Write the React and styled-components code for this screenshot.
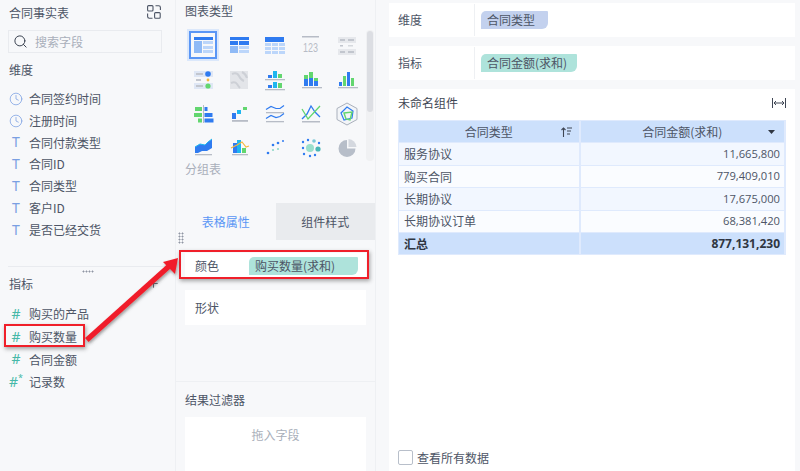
import React from 'react'
import styled, { createGlobalStyle } from 'styled-components'
import { Clock, Search, Plus } from 'lucide-react'

const Global = createGlobalStyle`
  html, body { margin: 0; padding: 0; background: #f7f8fa; }
  * { box-sizing: border-box; }
`

const Page = styled.div`
  position: relative;
  display: flex;
  width: 800px;
  height: 471px;
  overflow: hidden;
  background: #f7f8fa;
  color: #4d5566;
  font: 12px/1.3 "Noto Sans CJK SC", "Noto Sans", sans-serif;
`

const FieldPanel = styled.aside`
  flex: 0 0 176px;
  border-right: 1px solid #eef0f3;
`
const TitleRow = styled.div`
  display: flex;
  justify-content: space-between;
  height: 28px;
  padding: 5px 14px 0 9px;
`
const SearchBox = styled.div`
  display: flex;
  align-items: center;
  gap: 7px;
  width: 154px;
  height: 23px;
  margin: 2px 0 0 8px;
  padding-left: 4px;
  border: 1px solid #e9ebef;
  color: #a9afba;
  svg { color: #3a4250; }
`
const SectionLabel = styled.div`
  display: flex;
  align-items: center;
  justify-content: space-between;
  height: 22px;
  padding: 0 15px 0 9px;
  margin-top: ${p => p.$top || 0}px;
`
const FieldList = styled.div`
  margin-top: ${p => p.$top}px;
`
const Field = styled.div`
  display: flex;
  align-items: center;
  height: ${p => p.$h}px;
  padding-left: 9px;
`
const FieldIcon = styled.span`
  display: flex;
  justify-content: center;
  width: 14px;
  margin-right: 6px;
  color: ${p => (p.$measure ? '#46b8a8' : '#7a9fe2')};
  font: 14px/1 "Noto Sans", sans-serif;
  sup { font-size: 9px; line-height: 0; margin-top: 3px; }
`
const Divider = styled.div`
  height: 1px;
  margin: ${p => p.$top}px 0 0 8px;
  background: #e9ebef;
`
const Grip = styled.div`
  width: ${p => p.$w}px;
  height: ${p => p.$h}px;
  background-image: radial-gradient(circle, #8f96a3 0.9px, transparent 1.1px);
  background-size: 3px 3px;
`
const GripRow = styled.div`
  display: flex;
  justify-content: center;
  height: 6px;
  padding: 3px 0 0 0;
`

const ConfigPanel = styled.section`
  position: relative;
  flex: 0 0 200px;
  display: flex;
  flex-direction: column;
  border-right: 1px solid #eef0f3;
`
const PanelTitle = styled.div`
  height: 22px;
  margin-bottom: 6px;
  line-height: 22px;
`
const ChartArea = styled.div`
  position: relative;
  height: 181px;
  padding-left: 9px;
`
const ChartGrid = styled.div`
  display: grid;
  grid-template-columns: repeat(5, 36px);
  grid-auto-rows: 34.4px;
`
const ChartCell = styled.div`
  display: flex;
  align-items: center;
  justify-content: center;
`
const ChartFrame = styled.div`
  display: flex;
  align-items: center;
  justify-content: center;
  width: 28px;
  height: 28px;
  ${p => p.$on && 'border: 2px solid #5a96f5; box-shadow: 0 0 0 2px #dbe8fb;'}
`
const GroupLabel = styled.div`
  margin-top: -5px;
  color: #a9afba;
`
const ScrollTrack = styled.div`
  position: absolute;
  top: 30px;
  right: 1px;
  width: 8px;
  height: 131px;
  padding: 1px;
  border-radius: 4px;
  background: #f0f1f3;
`
const ScrollThumb = styled.div`
  height: 81px;
  border-radius: 3px;
  background: #dcdee3;
`
const Tabs = styled.div`
  display: flex;
  height: 37px;
  margin-top: 22px;
`
const Tab = styled.div`
  flex: 1;
  display: flex;
  align-items: center;
  justify-content: center;
  color: ${p => (p.$on ? '#5a96f5' : '#4d5566')};
  background: ${p => (p.$on ? '#f7f8fa' : '#e9ebee')};
`
const SideGrip = styled(Grip)`
  position: absolute;
  left: 2px;
  top: 232px;
`
const PropRow = styled.div`
  display: flex;
  align-items: center;
  height: ${p => p.$h}px;
  margin: ${p => p.$top}px 9px 0;
  padding-left: 10px;
  background: #fff;
`
const PropName = styled.span`
  width: 54px;
`
const Pill = styled.span`
  display: flex;
  align-items: center;
  width: ${p => p.$w}px;
  height: 18px;
  padding-left: 6px;
  border-radius: 5px 1px 6px 0;
  background: ${p => (p.$measure ? '#aee3db' : '#c3d1ee')};
`
const FilterBlock = styled.div`
  margin-top: 56px;
  border-top: 1px solid #eef0f3;
  padding: 7px 9px 0;
  flex: 1;
  display: flex;
  flex-direction: column;
`
const FilterTitle = styled.div`
  height: 21px;
  line-height: 21px;
`
const DropBox = styled.div`
  flex: 1;
  margin-top: 7px;
  padding-top: 10px;
  background: #fff;
  color: #a9afba;
  text-align: center;
`

const Stage = styled.main`
  flex: 1;
  display: flex;
  flex-direction: column;
  gap: 9px;
  padding: 3px 5px 0 13px;
`
const ShelfRow = styled.div`
  display: flex;
  align-items: center;
  height: 34px;
  background: #fff;
`
const ShelfName = styled.div`
  display: flex;
  align-items: center;
  width: 86px;
  height: 32px;
  padding-left: 9px;
  margin-right: 6px;
  border-right: 1px solid #eef0f3;
`
const ResultCard = styled.div`
  flex: 1;
  display: flex;
  flex-direction: column;
  padding: 0 9px;
  background: #fff;
`
const ResultHead = styled.div`
  display: flex;
  align-items: center;
  justify-content: space-between;
  height: 31px;
  padding-bottom: 4px;
  color: #3f4654;
`
const DataTable = styled.table`
  width: 388px;
  border-collapse: collapse;
  table-layout: fixed;
  font-size: 12px;
`
const Cell = styled.td`
  position: relative;
  height: 22.4px;
  padding: ${p => (p.$num ? '0 4px 0 5px' : '0 5px')};
  border: 1px solid #dfeafd;
  border-right-width: 2px;
  color: #4d5566;
  text-align: ${p => p.$align || 'left'};
  font-family: ${p => (p.$num ? '"Open Sans", "Noto Sans", sans-serif' : 'inherit')};
  font-size: ${p => (p.$num && !p.$bold ? '11.2px' : '12px')};
  font-weight: ${p => (p.$bold ? 700 : 400)};
  ${p => p.$bold && 'color: #2f3642;'}
  background: ${p => p.$bg};
`
const HeadIcon = styled.span`
  position: absolute;
  top: 50%;
  right: ${p => p.$right}px;
  display: flex;
  transform: translateY(-50%);
`
const Footer = styled.label`
  display: flex;
  align-items: center;
  gap: 4px;
  margin-top: auto;
  height: 26px;
  padding-bottom: 1px;
`
const CheckBox = styled.span`
  width: 15px;
  height: 15px;
  border: 1px solid #b8bfca;
  border-radius: 2px;
  background: #fff;
`

const Callout = styled.div`
  position: absolute;
  left: ${p => p.$x}px;
  top: ${p => p.$y}px;
  width: ${p => p.$w}px;
  height: ${p => p.$h}px;
  border: 2px solid #f01f2a;
  box-shadow: 1px 2px 4px rgba(60, 60, 60, 0.45);
`
const ArrowLayer = styled.svg`
  position: absolute;
  left: 0;
  top: 0;
  pointer-events: none;
`

const B = '#2f7bf0'
const M = '#8fbaf6'
const L = '#bcd6fa'
const G = '#62d66f'
const C = '#1fb6ef'
const Y = '#f5b83d'
const A = '#b7bcc6'

const R = ({ x, y, w, h, f }) => <rect x={x} y={y} width={w} height={h} fill={f} />
const Dots = ({ list, f, r = 1.3 }) => list.map(([x, y], i) => <circle key={i} cx={x} cy={y} r={r} fill={f} />)

const charts = [
  <><R x={5} y={6} w={19} h={3} f={B} /><R x={5} y={10} w={8} h={12} f={M} /><R x={14} y={10} w={10} h={3} f={L} /><R x={14} y={15} w={10} h={3} f={L} /><R x={14} y={19} w={10} h={3} f={L} /></>,
  <><R x={5} y={6} w={19} h={3} f={B} /><R x={5} y={10} w={8} h={4} f={B} /><R x={14} y={10} w={10} h={4} f={B} /><R x={5} y={15} w={8} h={7} f={M} /><R x={14} y={15} w={10} h={3} f={L} /><R x={14} y={19} w={10} h={3} f={L} /></>,
  <><R x={4} y={6} w={19} h={5} f={B} />{[12, 16, 20].map(y => [4, 11, 18].map(x => <R key={`${x}-${y}`} x={x} y={y} w={6} h={3} f={L} />))}</>,
  <><R x={5} y={5} w={17} h={1.5} f={A} /><text x={13.5} y={21} textAnchor="middle" fontFamily="Liberation Sans, sans-serif" fontSize="13" fill={A} textLength="15" lengthAdjust="spacingAndGlyphs">123</text></>,
  <><R x={5} y={6} w={18} h={6} f="#e6e8ec" /><R x={5} y={18} w={18} h={6} f="#e6e8ec" /><R x={7} y={8} w={5} h={2} f="#c2c6ce" /><R x={15} y={8} w={6} h={2} f="#c2c6ce" /><R x={7} y={14} w={3} h={1.5} f="#c2c6ce" /><R x={15} y={14} w={5} h={1.5} f="#d6d9de" /><R x={7} y={20} w={5} h={2} f="#c2c6ce" /><R x={15} y={20} w={6} h={2} f="#c2c6ce" /></>,
  <><R x={5} y={5} w={19} h={6} f="#dfe7f5" /><R x={5} y={17} w={19} h={6} f="#dfe7f5" /><R x={7} y={7} w={7} h={2} f="#c2c6ce" /><R x={7} y={13} w={5} h={2} f="#c2c6ce" /><R x={7} y={19} w={7} h={2} f="#c2c6ce" /><Dots list={[[19, 8]]} f={B} r={2.8} /><Dots list={[[19, 14]]} f={Y} r={1.4} /><Dots list={[[19, 20]]} f={G} r={2.6} /></>,
  <><R x={5} y={5} w={18} h={18} f="#e3e5e9" /><path d="M7 8q5-2 7 2t5 5M6 17q4-2 6 1t3 4M17 6q4 2 5 6" fill="none" stroke="#cdd0d6" strokeWidth="2" /></>,
  <><R x={4} y={13} w={20} h={1.3} f={A} /><R x={4} y={23} w={20} h={1.3} f={A} /><R x={7} y={9} w={4} h={3} f={B} /><R x={12} y={5} w={4} h={7} f={C} /><R x={17} y={8} w={4} h={4} f={G} /><R x={7} y={19} w={4} h={3} f={B} /><R x={12} y={16} w={4} h={6} f={C} /><R x={17} y={17} w={4} h={5} f={G} /></>,
  <><R x={5} y={21} w={20} h={1.3} f={A} /><R x={7} y={13} w={4} h={7} f={B} /><R x={7} y={9} w={4} h={4} f={G} /><R x={12} y={12} w={4} h={8} f={B} /><R x={12} y={6} w={4} h={6} f={G} /><R x={17} y={15} w={4} h={5} f={B} /><R x={17} y={12} w={4} h={3} f={G} /></>,
  <><R x={5} y={21} w={20} h={1.3} f={A} /><R x={6} y={16} w={3} h={4} f={B} /><R x={10} y={10} w={3} h={10} f={G} /><R x={14} y={6} w={3} h={14} f={B} /><R x={18} y={12} w={3} h={8} f={G} /></>,
  <><R x={14} y={5} w={1} h={18} f={A} /><R x={6} y={7} w={7} h={4} f={G} /><R x={15.5} y={7} w={3} h={4} f={B} /><R x={5} y={13} w={8} h={4} f={G} /><R x={15.5} y={13} w={8} h={4} f={B} /><R x={9} y={18.5} w={4} h={4} f={G} /><R x={15.5} y={18.5} w={9} h={4} f={B} /></>,
  <><R x={7} y={20} w={16} h={1.8} f={A} /><R x={7} y={13} w={4} h={6} f={B} /><R x={12} y={10} w={4} h={4} f={C} /><R x={18} y={7} w={4} h={3} f={G} /></>,
  <><R x={5} y={12} w={18} h={1.3} f={A} /><R x={5} y={21} w={18} h={1.3} f={A} /><path d="M5 9.5l5-3 5 2 4 0 4-3M5 18.5l5-3 5 2 4-1 4-3" fill="none" stroke={B} strokeWidth="1.2" /></>,
  <><R x={5} y={21} w={18} h={1.5} f={A} /><path d="M5 19l5-5 4-8 4 6 5 5" fill="none" stroke={B} strokeWidth="1.3" /><path d="M5 9l6 10 12-13" fill="none" stroke={G} strokeWidth="1.3" /></>,
  <><path d="M14 3l10 5.5v11L14 25 4 19.5v-11z" fill="#f3f5f8" stroke="#a9b0bc" strokeWidth="1" /><path d="M14 7l6 4-1 7-8 2-3-7z" fill="none" stroke={B} strokeWidth="1.2" /><path d="M11 13l8-1-2 8-4-1z" fill="none" stroke={G} strokeWidth="1.4" /></>,
  <><R x={6} y={20} w={17} h={1.3} f={A} /><path d="M6 13l5-3 5 1 3-3 4-3v9l-5 3-5 0-4 2-3 0z" fill={B} /><path d="M6 13l5-3 5 1 3-3 4-3" fill="none" stroke={C} strokeWidth="1" /></>,
  <><R x={7} y={20} w={16} h={1.3} f={A} /><R x={8} y={9} w={4} h={10} f={B} /><R x={12} y={6} w={4} h={13} f={C} /><R x={17} y={14} w={4} h={5} f={G} /><path d="M6 14l6-3 5-3 4 5 3-1" fill="none" stroke={Y} strokeWidth="1.1" /></>,
  <><Dots list={[[7, 19], [12, 11], [17, 9]]} f={B} /><Dots list={[[22, 7]]} f={B} r={1} /><Dots list={[[17, 15], [12, 16]]} f="#8fd8c8" r={1.1} /></>,
  <><Dots list={[[13, 14]]} f="#9adfcc" r={4} /><Dots list={[[21, 15]]} f="#4ab6b6" r={2.6} /><Dots list={[[17, 7]]} f="#7cc8d8" r={1.8} /><Dots list={[[6, 8], [11, 6], [6, 14], [7, 20], [13, 22], [18, 21], [22, 9]]} f={B} r={1.2} /></>,
  <><path d="M14 6a8.5 8.5 0 1 0 8.5 8.5H14z" fill="#b7bec9" /><path d="M15.5 5a8.5 8.5 0 0 1 8 8h-8z" fill="#d4d8df" /></>,
]

const SwapIcon = () => (
  <svg width="14" height="14" viewBox="0 0 14 14" fill="none" stroke="#4d5566" strokeWidth="1.1">
    <rect x="0.6" y="0.6" width="5.4" height="5.4" rx="1" />
    <rect x="7.6" y="7.6" width="5.6" height="5.6" rx="1" />
    <path d="M8.5 0.8h3.2q1.7 0 1.7 1.7v2.6M5.5 13.2H2.3q-1.7 0-1.7-1.7V8.5" />
  </svg>
)

const FitIcon = () => (
  <svg width="14" height="10" viewBox="0 0 14 10" fill="none" stroke="#3f4654" strokeWidth="1">
    <path d="M.5 0v10M13.5 0v10M2 5h10M4 3L2 5l2 2M10 3l2 2-2 2" />
  </svg>
)

const SortIcon = () => (
  <svg width="11" height="10" viewBox="0 0 11 10" fill="none" stroke="#3f4654" strokeWidth="1.1">
    <path d="M2.5 10V1M.5 3l2-2 2 2M6 1h5M6 4h4M6 7h3" />
  </svg>
)

const Caret = () => (
  <svg width="7" height="4" viewBox="0 0 7 4"><path d="M0 0h7L3.5 4z" fill="#2f3642" /></svg>
)

const dims = [
  ['clock', '合同签约时间'],
  ['clock', '注册时间'],
  ['T', '合同付款类型'],
  ['T', '合同ID'],
  ['T', '合同类型'],
  ['T', '客户ID'],
  ['T', '是否已经交货'],
]
const measures = ['购买的产品', '购买数量', '合同金额']
const rows = [
  ['服务协议', '11,665,800'],
  ['购买合同', '779,409,010'],
  ['长期协议', '17,675,000'],
  ['长期协议订单', '68,381,420'],
]

export default function App() {
  return (
    <Page>
      <Global />
      <FieldPanel>
        <TitleRow>
          <span>合同事实表</span>
          <SwapIcon />
        </TitleRow>
        <SearchBox>
          <Search size={15} strokeWidth={1.6} />
          <span>搜索字段</span>
        </SearchBox>
        <SectionLabel $top={6}>维度</SectionLabel>
        <FieldList $top={7}>
          {dims.map(([kind, name]) => (
            <Field key={name} $h={21.8}>
              <FieldIcon>{kind === 'clock' ? <Clock size={14} strokeWidth={1.3} /> : 'T'}</FieldIcon>
              {name}
            </Field>
          ))}
        </FieldList>
        <Divider $top={25} />
        <GripRow><Grip $w={12} $h={3} /></GripRow>
        <SectionLabel>
          指标
          <Plus size={13} strokeWidth={1.5} color="#3a4250" />
        </SectionLabel>
        <FieldList $top={8}>
          {measures.map(name => (
            <Field key={name} $h={22.7}>
              <FieldIcon $measure>#</FieldIcon>
              {name}
            </Field>
          ))}
          <Field $h={22.7}>
            <FieldIcon $measure>#<sup>*</sup></FieldIcon>
            记录数
          </Field>
        </FieldList>
      </FieldPanel>

      <ConfigPanel>
        <ChartArea>
          <PanelTitle>图表类型</PanelTitle>
          <ChartGrid>
            {charts.map((c, i) => (
              <ChartCell key={i}>
                <ChartFrame $on={i === 0}>
                  <svg width={i === 0 ? 24 : 28} height={i === 0 ? 24 : 28} viewBox={i === 0 ? '2 2 24 24' : '0 0 28 28'}>{c}</svg>
                </ChartFrame>
              </ChartCell>
            ))}
          </ChartGrid>
          <GroupLabel>分组表</GroupLabel>
          <ScrollTrack><ScrollThumb /></ScrollTrack>
        </ChartArea>
        <Tabs>
          <Tab $on>表格属性</Tab>
          <Tab>组件样式</Tab>
        </Tabs>
        <SideGrip $w={6} $h={12} />
        <PropRow $h={25} $top={13}>
          <PropName>颜色</PropName>
          <Pill $measure $w={109}>购买数量(求和)</Pill>
        </PropRow>
        <PropRow $h={35} $top={12}>
          <PropName>形状</PropName>
        </PropRow>
        <FilterBlock>
          <FilterTitle>结果过滤器</FilterTitle>
          <DropBox>拖入字段</DropBox>
        </FilterBlock>
      </ConfigPanel>

      <Stage>
        <ShelfRow>
          <ShelfName>维度</ShelfName>
          <Pill $w={67}>合同类型</Pill>
        </ShelfRow>
        <ShelfRow>
          <ShelfName>指标</ShelfName>
          <Pill $measure $w={96}>合同金额(求和)</Pill>
        </ShelfRow>
        <ResultCard>
          <ResultHead>
            <span>未命名组件</span>
            <FitIcon />
          </ResultHead>
          <DataTable>
            <colgroup>
              <col style={{ width: 181 }} />
              <col />
            </colgroup>
            <tbody>
              <tr>
                <Cell $bg="#cce0fc" $align="center">
                  合同类型
                  <HeadIcon $right={7}><SortIcon /></HeadIcon>
                </Cell>
                <Cell $bg="#cce0fc" $align="center">
                  合同金额(求和)
                  <HeadIcon $right={9}><Caret /></HeadIcon>
                </Cell>
              </tr>
              {rows.map(([name, value], i) => (
                <tr key={name}>
                  <Cell $bg={i % 2 ? '#fafcff' : '#f2f7ff'}>{name}</Cell>
                  <Cell $bg={i % 2 ? '#fafcff' : '#f2f7ff'} $align="right" $num>{value}</Cell>
                </tr>
              ))}
              <tr>
                <Cell $bg="#cce0fc" $bold>汇总</Cell>
                <Cell $bg="#cce0fc" $bold $num $align="right">877,131,230</Cell>
              </tr>
            </tbody>
          </DataTable>
          <Footer>
            <CheckBox />
            查看所有数据
          </Footer>
        </ResultCard>
      </Stage>

      <Callout $x={4} $y={324} $w={81} $h={23} />
      <Callout $x={179} $y={250} $w={190} $h={29} />
      <ArrowLayer width="800" height="471" viewBox="0 0 800 471">
        <defs>
          <filter id="arrowShadow" x="-20%" y="-20%" width="140%" height="140%">
            <feDropShadow dx="1" dy="2" stdDeviation="1.5" floodColor="#444" floodOpacity="0.5" />
          </filter>
        </defs>
        <g filter="url(#arrowShadow)" fill="#f01f2a">
          <path d="M85 338 L167 264.5 L170.5 268.5 L88.5 342 Z" />
          <path d="M178 258 L163 262 L175 274 Z" />
        </g>
      </ArrowLayer>
    </Page>
  )
}
